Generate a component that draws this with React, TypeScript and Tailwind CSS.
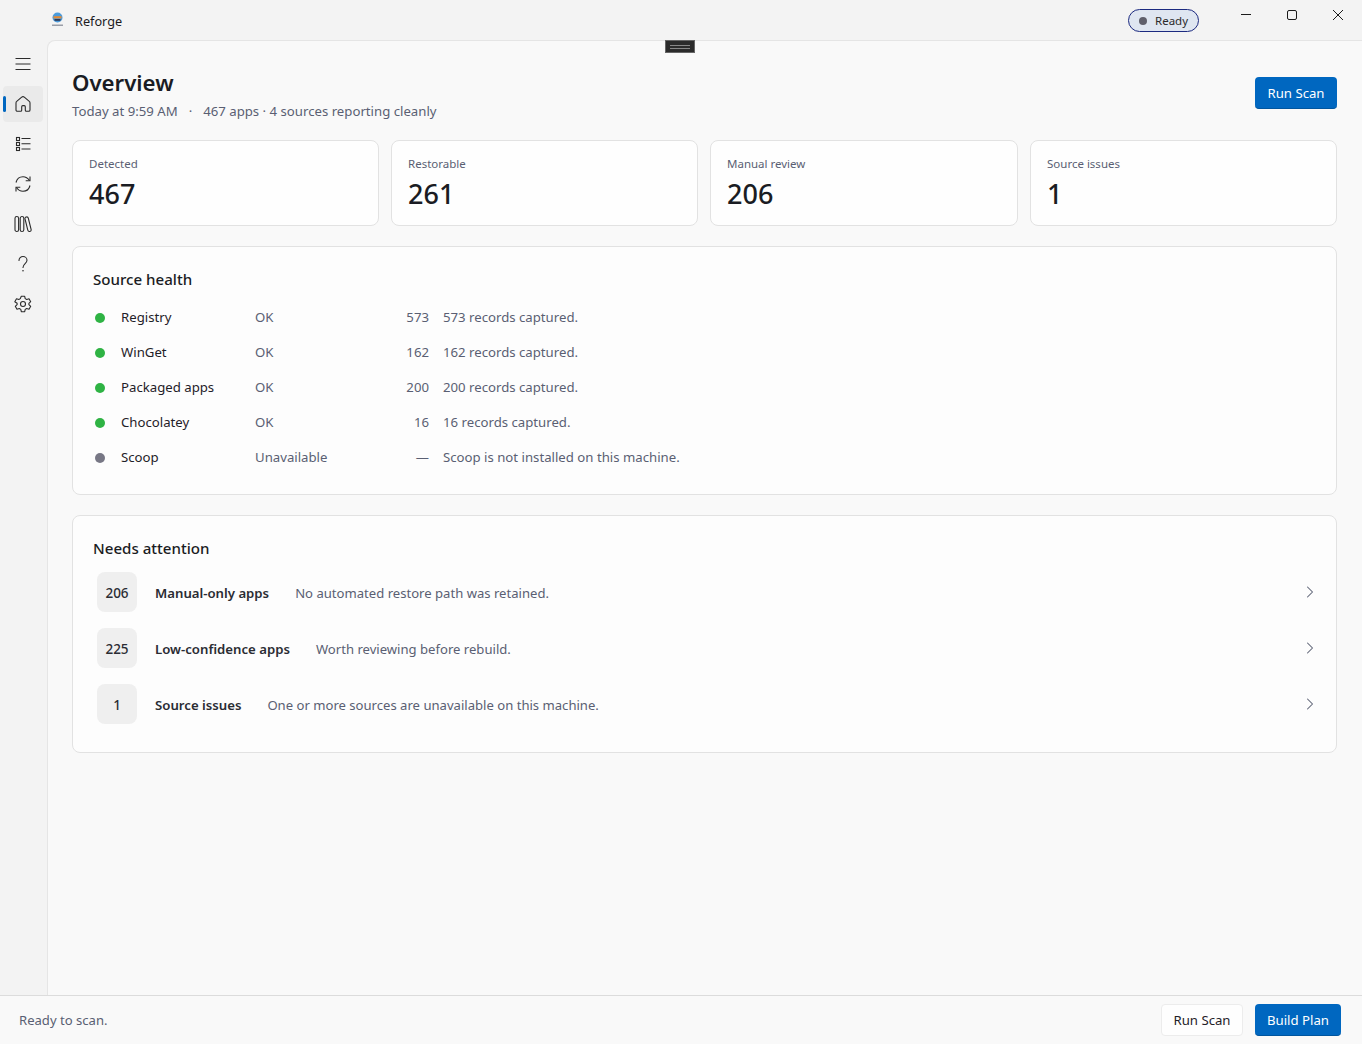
import { ChevronRight } from "lucide-react";

const stats = [
  { label: "Detected", value: "467" },
  { label: "Restorable", value: "261" },
  { label: "Manual review", value: "206" },
  { label: "Source issues", value: "1" },
];

const sources = [
  { name: "Registry", status: "OK", count: "573", note: "573 records captured.", ok: true },
  { name: "WinGet", status: "OK", count: "162", note: "162 records captured.", ok: true },
  { name: "Packaged apps", status: "OK", count: "200", note: "200 records captured.", ok: true },
  { name: "Chocolatey", status: "OK", count: "16", note: "16 records captured.", ok: true },
  { name: "Scoop", status: "Unavailable", count: "—", note: "Scoop is not installed on this machine.", ok: false },
];

const attention = [
  { count: "206", title: "Manual-only apps", note: "No automated restore path was retained." },
  { count: "225", title: "Low-confidence apps", note: "Worth reviewing before rebuild." },
  { count: "1", title: "Source issues", note: "One or more sources are unavailable on this machine." },
];

const NavIcon = ({ children }: { children: React.ReactNode }) => (
  <svg width="18" height="18" viewBox="0 0 18 18" fill="none" stroke="#2b2b2b" strokeWidth="1.1">
    {children}
  </svg>
);

const navIcons = [
  <NavIcon>
    <path
      d="M7.700 2.200a2 2 0 0 1 2.600 0l5 4.200c.5.400.7.900.7 1.500V15a1.300 1.300 0 0 1-1.300 1.300h-2.400a1 1 0 0 1-1-1v-3.600a1.100 1.100 0 0 0-1.100-1.100H8.800a1.100 1.100 0 0 0-1.100 1.100v3.600a1 1 0 0 1-1 1H3.300A1.300 1.300 0 0 1 2 15V7.900c0-.6.200-1.100.7-1.500z"
      strokeLinejoin="round"
    />
  </NavIcon>,
  <NavIcon>
    <rect x="2.500" y="2.500" width="3" height="3" />
    <rect x="2.500" y="7.500" width="3" height="3" />
    <rect x="2.500" y="12.500" width="3" height="3" />
    <path d="M7.500 3.500h9M7.500 8.800h9M7.500 14h9" />
  </NavIcon>,
  <NavIcon>
    <path d="M2 7.500C2.800 4.200 5.600 1.700 9 1.700c2.800 0 5 1.500 6.500 3.800M16 10.500c-.8 3.300-3.600 5.800-7 5.800-2.800 0-5-1.500-6.500-3.800" />
    <path d="M16 1.500v4.300h-4.300M2 16.500v-4.300h4.300" />
  </NavIcon>,
  <NavIcon>
    <rect x="1" y="1.500" width="3.600" height="15" rx="1.800" />
    <rect x="6.200" y="1.500" width="3.600" height="15" rx="1.800" />
    <rect x="12.300" y="1.700" width="3.400" height="15" rx="1.700" transform="rotate(-14 14 9)" />
  </NavIcon>,
  <NavIcon>
    <path d="M5 5.500C5 3.200 6.800 1.500 9 1.500s4 1.600 4 3.700c0 3.300-4 3.500-4 7.300" strokeLinecap="round" />
    <circle cx="9" cy="15.800" r=".8" fill="#2b2b2b" stroke="none" />
  </NavIcon>,
  <NavIcon>
    <path
      d="M7.300 1.300h3.400l.5 2.300 1.500.9 2.300-.7 1.700 2.900-1.800 1.600v1.400l1.800 1.600-1.700 2.900-2.300-.7-1.500.9-.5 2.300H7.300l-.5-2.300-1.500-.9-2.300.7-1.700-2.900 1.800-1.600V8.300L.8 6.700l1.700-2.900 2.300.7 1.500-.9z"
      strokeLinejoin="round"
    />
    <circle cx="9" cy="9" r="2.500" />
  </NavIcon>,
];

const Logo = () => (
  <svg width="14" height="16" viewBox="0 0 14 16">
    <circle cx="6.500" cy="5.500" r="5" fill="#4a9bdc" />
    <rect x="2.500" y="4.200" width="8" height="2.200" fill="#e58a33" />
    <rect x="3.500" y="7" width="6" height="1.800" fill="#2f3a58" />
    <rect x="1" y="12.500" width="11" height="1.500" fill="#9a9ea8" />
  </svg>
);

export default function App() {
  return (
    <div
      className="relative flex h-[1044px] w-[1362px] flex-col overflow-hidden bg-[#f3f3f3] text-[#1b1b1f]"
      style={{ fontFamily: '"Noto Sans", "Open Sans", sans-serif' }}
    >
      {/* title bar */}
      <div className="flex h-[40px] shrink-0 items-center pl-[51px]">
        <Logo />
        <span className="ml-[10px] mt-[3px] text-[12.700px]">Reforge</span>
        <div className="ml-auto mt-[1px] flex h-[23px] w-[71px] items-center rounded-full border border-[#1c2a80] bg-[#dfe6f1] pl-[10px]">
          <span className="size-[8px] rounded-full bg-[#5f5f6b]" />
          <span className="ml-[8px] text-[11.500px] text-[#2b2b2b]">Ready</span>
        </div>
        <div className="-mt-[10px] ml-[24px] mr-[1px] flex items-center text-[#1b1b1b]">
          <div className="flex w-[46px] justify-center">
            <svg width="12" height="12" viewBox="0 0 12 12" stroke="currentColor"><path d="M1 5.500h10" /></svg>
          </div>
          <div className="flex w-[46px] justify-center">
            <svg width="12" height="12" viewBox="0 0 12 12" fill="none" stroke="currentColor"><rect x="1.500" y="1.500" width="9" height="9" rx="1.500" /></svg>
          </div>
          <div className="flex w-[46px] justify-center">
            <svg width="12" height="12" viewBox="0 0 12 12" stroke="currentColor"><path d="M1 1l10 10M11 1 1 11" /></svg>
          </div>
        </div>
      </div>

      <div className="flex min-h-0 flex-1">
        {/* nav rail */}
        <div className="flex w-[47px] shrink-0 flex-col items-center pr-[1px] pt-[4px]">
          <div className="flex h-[40px] w-full items-center justify-center">
            <svg width="18" height="18" viewBox="0 0 18 18" stroke="#2b2b2b"><path d="M1.500 3.500h15M1.500 9h15M1.500 14.500h15" /></svg>
          </div>
          {navIcons.map((icon, i) => (
            <div key={i} className="relative flex h-[40px] w-full items-center justify-center px-[3px]">
              <div className={`flex h-[36px] w-full items-center justify-center rounded-[4px] ${i === 0 ? "bg-[#eaeaea]" : ""}`}>
                {icon}
              </div>
              {i === 0 && <span className="absolute left-[3px] top-[12px] h-[16px] w-[3px] rounded-full bg-[#0067c0]" />}
            </div>
          ))}
        </div>

        {/* content */}
        <div className="relative min-w-0 flex-1 rounded-tl-[8px] border-l border-t border-[#e5e5e5] bg-[#f9f9f9] pl-[24px] pr-[25px]">
          <div className="absolute left-[617px] top-[-1px] flex h-[13px] w-[30px] items-center justify-center border border-[#666] bg-[#2b2b2b]">
            <div className="h-[4px] w-[20px] border-y border-[#888]" />
          </div>

          <div className="flex items-start justify-between pt-[26px]">
            <div>
              <h1 className="text-[22.200px] font-semibold leading-[32px] text-[#1a1c23]">Overview</h1>
              <p className="mt-[3px] text-[13.200px] leading-[18px] text-[#5a5f73]">
                Today at 9:59 AM<span className="mx-[11px]">·</span>467 apps · 4 sources reporting cleanly
              </p>
            </div>
            <button className="mt-[10px] h-[32px] w-[82px] rounded-[4px] border-b border-[#00559e] bg-[#0067c0] pt-[2px] text-[13.200px] text-white">
              Run Scan
            </button>
          </div>

          <div className="mt-[20px] grid grid-cols-[307px_307px_308px_307px] gap-[12px]">
            {stats.map((s) => (
              <div key={s.label} className="h-[86px] rounded-[8px] border border-[#e2e2e2] bg-[#fefefe] pl-[16px] pt-[15px]">
                <div className="text-[11.500px] leading-[16px] text-[#5a5f73]">{s.label}</div>
                <div className="mt-[4px] text-[27px] font-medium leading-[36px] text-[#1a1c23]">{s.value}</div>
              </div>
            ))}
          </div>

          <section className="mt-[20px] h-[249px] rounded-[8px] border border-[#e2e2e2] bg-[#fdfdfd] pl-[20px] pt-[21px]">
            <h2 className="text-[15.100px] font-medium leading-[22px] text-[#1a1c23]">Source health</h2>
            <div className="mt-[10px]">
              {sources.map((s) => (
                <div key={s.name} className="flex h-[35px] items-center text-[13.200px]">
                  <span className={`ml-[2px] size-[10px] shrink-0 rounded-full ${s.ok ? "bg-[#2fb344]" : "bg-[#777785]"}`} />
                  <span className="ml-[16px] w-[134px] text-[#1f2128]">{s.name}</span>
                  <span className="w-[120px] text-[#5a5f73]">{s.status}</span>
                  <span className="w-[54px] text-right text-[#5a5f73]">{s.count}</span>
                  <span className="ml-[14px] text-[#5a5f73]">{s.note}</span>
                </div>
              ))}
            </div>
          </section>

          <section className="mt-[20px] h-[238px] rounded-[8px] border border-[#e2e2e2] bg-[#fdfdfd] pl-[20px] pr-[16px] pt-[21px]">
            <h2 className="text-[15.100px] font-medium leading-[22px] text-[#1a1c23]">Needs attention</h2>
            <div className="mt-[13px] flex flex-col gap-[16px]">
              {attention.map((a) => (
                <div key={a.title} className="flex h-[40px] items-center pl-[4px]">
                  <div className="flex size-[40px] shrink-0 items-center justify-center rounded-[8px] bg-[#efefef] pt-[3px] text-[13.500px] font-medium text-[#2a2c33]">
                    {a.count}
                  </div>
                  <span className="ml-[18px] pt-[4px] text-[13.200px] font-semibold text-[#2a2c33]">{a.title}</span>
                  <span className="ml-[26px] pt-[4px] text-[13.100px] text-[#5a5f73]">{a.note}</span>
                  <ChevronRight className="ml-auto size-[20px] text-[#5a5f73]" strokeWidth={1.250} />
                </div>
              ))}
            </div>
          </section>
        </div>
      </div>

      {/* status bar */}
      <div className="flex h-[49px] shrink-0 items-center border-t border-[#dcdcdc] bg-[#f9f9f9] pl-[19px] pr-[21px]">
        <span className="mt-[1px] text-[13.100px] text-[#5a5f73]">Ready to scan.</span>
        <button className="ml-auto h-[32px] w-[82px] rounded-[4px] border border-[#ececec] bg-[#fefefe] pt-[1px] text-[13.200px] text-[#1f2128]">
          Run Scan
        </button>
        <button className="ml-[12px] h-[32px] w-[86px] rounded-[4px] border-b border-[#00559e] bg-[#0067c0] pt-[2px] text-[13.200px] text-white">
          Build Plan
        </button>
      </div>
    </div>
  );
}
